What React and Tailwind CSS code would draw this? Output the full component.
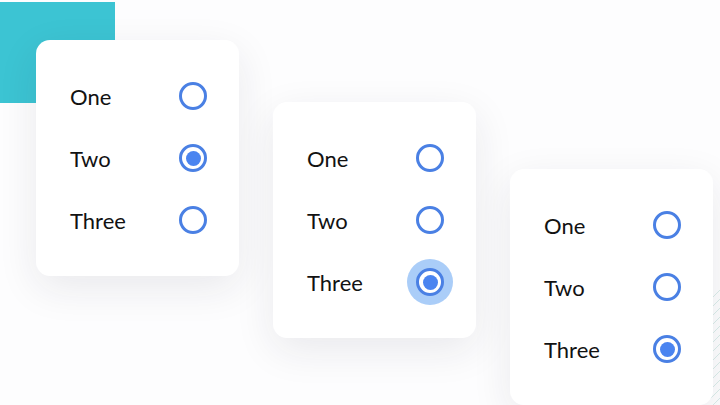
import React from "react";

const cards = [
  { top: "mt-[40px]", selected: 1, focus: false },
  { top: "mt-[102px]", selected: 2, focus: true },
  { top: "mt-[169px]", selected: 2, focus: false },
];

const labels = ["One", "Two", "Three"];

function Radio({ checked, focus }) {
  return (
    <div className="w-[46px] h-[46px] flex items-center justify-center">
      <div
        className={
          focus
            ? "w-[46px] h-[46px] rounded-full bg-[#aacdf8] flex items-center justify-center"
            : "flex items-center justify-center"
        }
      >
        <div className="w-[28px] h-[28px] rounded-full border-[3px] border-[#4a80e4] bg-white flex items-center justify-center">
          {checked && <div className="w-[15px] h-[15px] rounded-full bg-[#4a84f0]" />}
        </div>
      </div>
    </div>
  );
}

function Card({ top, selected, focus }) {
  return (
    <div
      className={`${top} w-[203px] h-[236px] shrink-0 rounded-[14px] bg-white shadow-[0_12px_40px_rgba(30,30,60,0.09)] pt-[25px] pl-[34px] pr-[23px]`}
    >
      {labels.map((l, i) => (
        <div key={l} className="h-[62px] flex items-center justify-between">
          <span className="text-[22px] text-[#121212]">{l}</span>
          <Radio checked={i === selected} focus={focus && i === selected} />
        </div>
      ))}
    </div>
  );
}

export default function App() {
  return (
    <div
      className="relative w-[720px] h-[405px] overflow-hidden bg-[#fdfdfe]"
      style={{ fontFamily: "Lato, 'Open Sans', sans-serif" }}
    >
      {/* teal block behind first card */}
      <div className="absolute left-0 top-[2px] w-[115px] h-[101px] bg-[#3cc4d3]" />

      {/* faint stripes at right edge */}
      <svg className="absolute right-0 top-[290px]" width="10" height="115">
        {Array.from({ length: 14 }).map((_, i) => (
          <line key={i} x1="0" y1={i * 9 + 10} x2="10" y2={i * 9} stroke="#d9ece9" strokeWidth="1" />
        ))}
      </svg>

      <div className="relative flex items-start gap-[34px] pl-[36px]">
        {cards.map((c, i) => (
          <Card key={i} {...c} />
        ))}
      </div>
    </div>
  );
}
